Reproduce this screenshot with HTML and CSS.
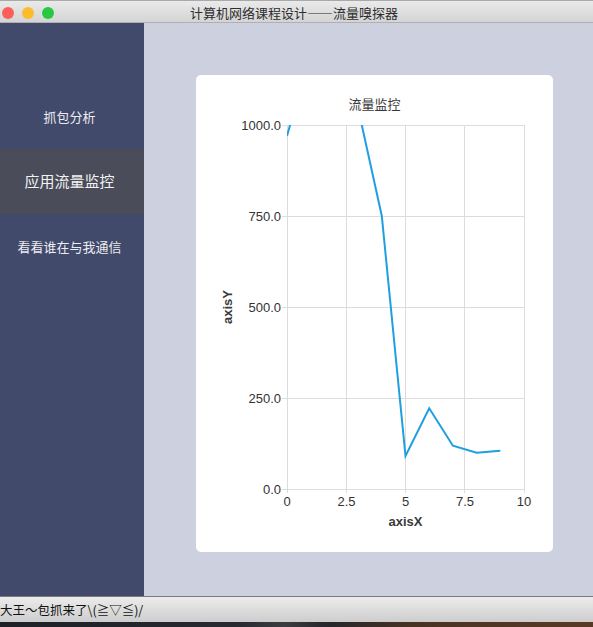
FILE: index.html
```html
<!DOCTYPE html>
<html lang="zh">
<head>
<meta charset="utf-8">
<title>计算机网络课程设计——流量嗅探器</title>
<link rel="stylesheet" href="styles.css">
</head>
<body>
<div class="window">
  <div class="titlebar">
    <div class="lights">
      <span class="light red"></span>
      <span class="light yellow"></span>
      <span class="light green"></span>
    </div>
    <div class="title">计算机网络课程设计——流量嗅探器</div>
  </div>
  <div class="content">
    <nav class="sidebar">
      <div class="nav-item">抓包分析</div>
      <div class="nav-item active">应用流量监控</div>
      <div class="nav-item">看看谁在与我通信</div>
    </nav>
    <main class="main">
      <div class="card">
        <svg class="chart" width="357" height="477" viewBox="0 0 357 477">
          <defs>
            <clipPath id="plot">
              <rect x="91" y="50" width="237" height="364"/>
            </clipPath>
          </defs>
          <text class="chart-title" x="178.5" y="34" text-anchor="middle">流量监控</text>
          <g class="grid">
            <line x1="86" y1="50.5" x2="328" y2="50.5"/>
            <line x1="86" y1="141.5" x2="328" y2="141.5"/>
            <line x1="86" y1="232.5" x2="328" y2="232.5"/>
            <line x1="86" y1="323.5" x2="328" y2="323.5"/>
            <line x1="86" y1="414.5" x2="328" y2="414.5"/>
            <line x1="91.5" y1="50" x2="91.5" y2="418"/>
            <line x1="150.5" y1="50" x2="150.5" y2="418"/>
            <line x1="209.5" y1="50" x2="209.5" y2="418"/>
            <line x1="268.5" y1="50" x2="268.5" y2="418"/>
            <line x1="328.5" y1="50" x2="328.5" y2="418"/>
          </g>
          <g class="ytick" text-anchor="end">
            <text x="85" y="54.5">1000.0</text>
            <text x="85" y="145.5">750.0</text>
            <text x="85" y="236.5">500.0</text>
            <text x="85" y="327.5">250.0</text>
            <text x="85" y="418.5">0.0</text>
          </g>
          <g class="xtick" text-anchor="middle">
            <text x="91" y="431">0</text>
            <text x="150.5" y="431">2.5</text>
            <text x="209.5" y="431">5</text>
            <text x="269" y="431">7.5</text>
            <text x="328" y="431">10</text>
          </g>
          <text class="axis-label" x="209.5" y="451" text-anchor="middle">axisX</text>
          <text class="axis-label" x="0" y="0" text-anchor="middle" transform="translate(36 232) rotate(-90)">axisY</text>
          <g clip-path="url(#plot)">
            <polyline class="series" points="91,60.9 114.7,-22.8 138.4,-60 162.1,33.3 185.8,141 209.5,381 233.2,333.3 256.9,370.7 280.6,377.7 304.3,375.7"/>
          </g>
        </svg>
      </div>
    </main>
  </div>
  <div class="statusbar">大王～包抓来了\(≧▽≦)/</div>
  <div class="desktop"></div>
</div>
</body>
</html>
```
FILE: styles.css
```css
html, body {
  margin: 0;
  padding: 0;
}
body {
  width: 593px;
  height: 627px;
  overflow: hidden;
  font-family: "Noto Sans CJK SC", "Liberation Sans", sans-serif;
}
.window {
  display: flex;
  flex-direction: column;
  height: 627px;
}
.titlebar {
  flex: none;
  border-top: 1px solid #a9a9ab;
  border-bottom: 1px solid #b0b0b2;
  box-sizing: content-box;
  height: 21px;
  background: linear-gradient(#ebeaeb, #d5d4d5);
  display: flex;
  align-items: center;
  position: relative;
}
.lights {
  display: flex;
  gap: 8px;
  padding-left: 2px;
  padding-top: 2px;
}
.light {
  width: 12px;
  height: 12px;
  border-radius: 50%;
  display: block;
}
.red { background: #fc5f57; }
.yellow { background: #fdbc2e; }
.green { background: #28c840; }
.title {
  position: absolute;
  left: 0;
  right: 0;
  top: 0;
  bottom: 0;
  display: flex;
  align-items: center;
  justify-content: center;
  font-size: 13px;
  color: #2e2e2e;
  padding-top: 2px;
  padding-right: 5px;
}
.content {
  flex: 1;
  display: flex;
  min-height: 0;
}
.sidebar {
  width: 144px;
  flex: none;
  background: #414a6b;
  padding-top: 61px;
  box-sizing: border-box;
  display: flex;
  flex-direction: column;
}
.nav-item {
  height: 65px;
  display: flex;
  align-items: center;
  justify-content: center;
  padding-right: 5px;
  font-size: 13px;
  color: #ececf0;
}
.nav-item.active {
  background: #4a4c5a;
  font-size: 15px;
  color: #f2f2f2;
  padding-bottom: 2px;
  box-sizing: border-box;
}
.main {
  flex: 1;
  background: #cdd0df;
  padding: 52px 40px 44px 52px;
}
.card {
  width: 357px;
  height: 477px;
  background: #ffffff;
  border-radius: 5px;
}
.chart {
  display: block;
}
.chart-title {
  font-family: "Noto Sans CJK SC", sans-serif;
  font-size: 13px;
  fill: #3a3a3a;
}
.grid line {
  stroke: #dcdcdc;
  stroke-width: 1;
}
.ytick text, .xtick text {
  font-family: "Liberation Sans", Arial, sans-serif;
  font-size: 13px;
  fill: #333333;
}
.axis-label {
  font-family: "Liberation Sans", Arial, sans-serif;
  font-size: 13px;
  font-weight: bold;
  fill: #3a3a3a;
}
.series {
  fill: none;
  stroke: #1f9fe0;
  stroke-width: 2;
  stroke-linejoin: miter;
}
.statusbar {
  height: 25px;
  flex: none;
  border-top: 1px solid #7c7c7c;
  background: linear-gradient(#ececec, #cdcdcd);
  font-size: 12.5px;
  color: #111;
  display: flex;
  align-items: center;
  white-space: nowrap;
}
.desktop {
  height: 5px;
  flex: none;
  background: linear-gradient(90deg, #1d2026 0%, #262a30 40%, #3a3c40 48%, #25272c 55%, #4a3222 70%, #5a3a26 100%);
}
```
